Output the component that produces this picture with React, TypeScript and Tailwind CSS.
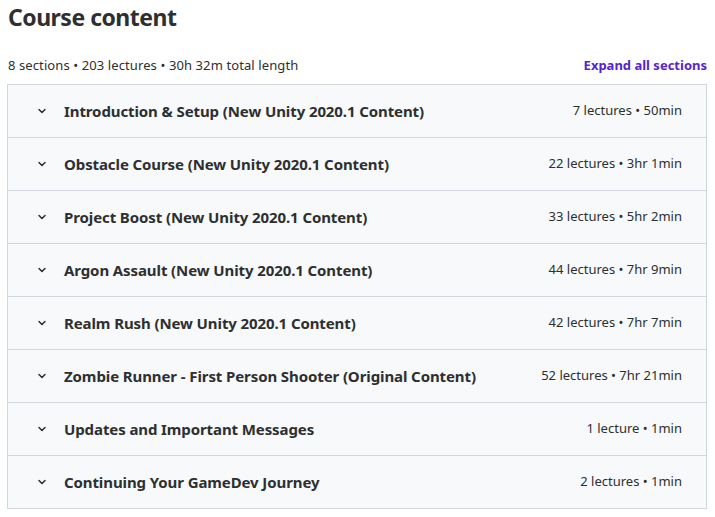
import React from "react";

const sections = [
  { title: "Introduction & Setup (New Unity 2020.1 Content)", meta: "7 lectures • 50min" },
  { title: "Obstacle Course (New Unity 2020.1 Content)", meta: "22 lectures • 3hr 1min" },
  { title: "Project Boost (New Unity 2020.1 Content)", meta: "33 lectures • 5hr 2min" },
  { title: "Argon Assault (New Unity 2020.1 Content)", meta: "44 lectures • 7hr 9min" },
  { title: "Realm Rush (New Unity 2020.1 Content)", meta: "42 lectures • 7hr 7min" },
  { title: "Zombie Runner - First Person Shooter (Original Content)", meta: "52 lectures • 7hr 21min" },
  { title: "Updates and Important Messages", meta: "1 lecture • 1min" },
  { title: "Continuing Your GameDev Journey", meta: "2 lectures • 1min" },
];

const Chevron = () => (
  <svg width="12" height="12" viewBox="0 0 24 24" fill="none" stroke="#2d2f31" strokeWidth="3" strokeLinecap="round" strokeLinejoin="round">
    <path d="M6 9l6 6 6-6" />
  </svg>
);

export default function App() {
  return (
    <div className="w-[715px] bg-white pl-[7px] pr-[8px] text-[#2d2f31]" style={{ fontFamily: '"Noto Sans", "Open Sans", sans-serif' }}>
      <h2 className="pt-[1px] pl-[1px] text-[23px] font-bold leading-[32px] tracking-[-0.5px]">Course content</h2>

      <div className="mt-[22px] flex items-end justify-between pl-[1px] pb-[9px]">
        <span className="text-[13px] leading-[20px] tracking-[0.1px]">8 sections • 203 lectures • 30h 32m total length</span>
        <button className="text-[13px] font-bold leading-[20px] text-[#5624d0]">Expand all sections</button>
      </div>

      {/* Sections */}
      <div className="border border-[#d1d7dc]">
        {sections.map((s, i) => (
          <div
            key={s.title}
            className={`box-content flex h-[52px] items-center justify-between bg-[#f7f9fa] pl-[28px] pr-[24px] ${i > 0 ? "border-t border-[#d1d7dc]" : ""}`}
          >
            <div className="flex items-center gap-[16px]">
              <Chevron />
              <span className="text-[15px] font-bold tracking-[-0.1px]">{s.title}</span>
            </div>
            <span className="text-[13px]">{s.meta}</span>
          </div>
        ))}
      </div>
    </div>
  );
}
